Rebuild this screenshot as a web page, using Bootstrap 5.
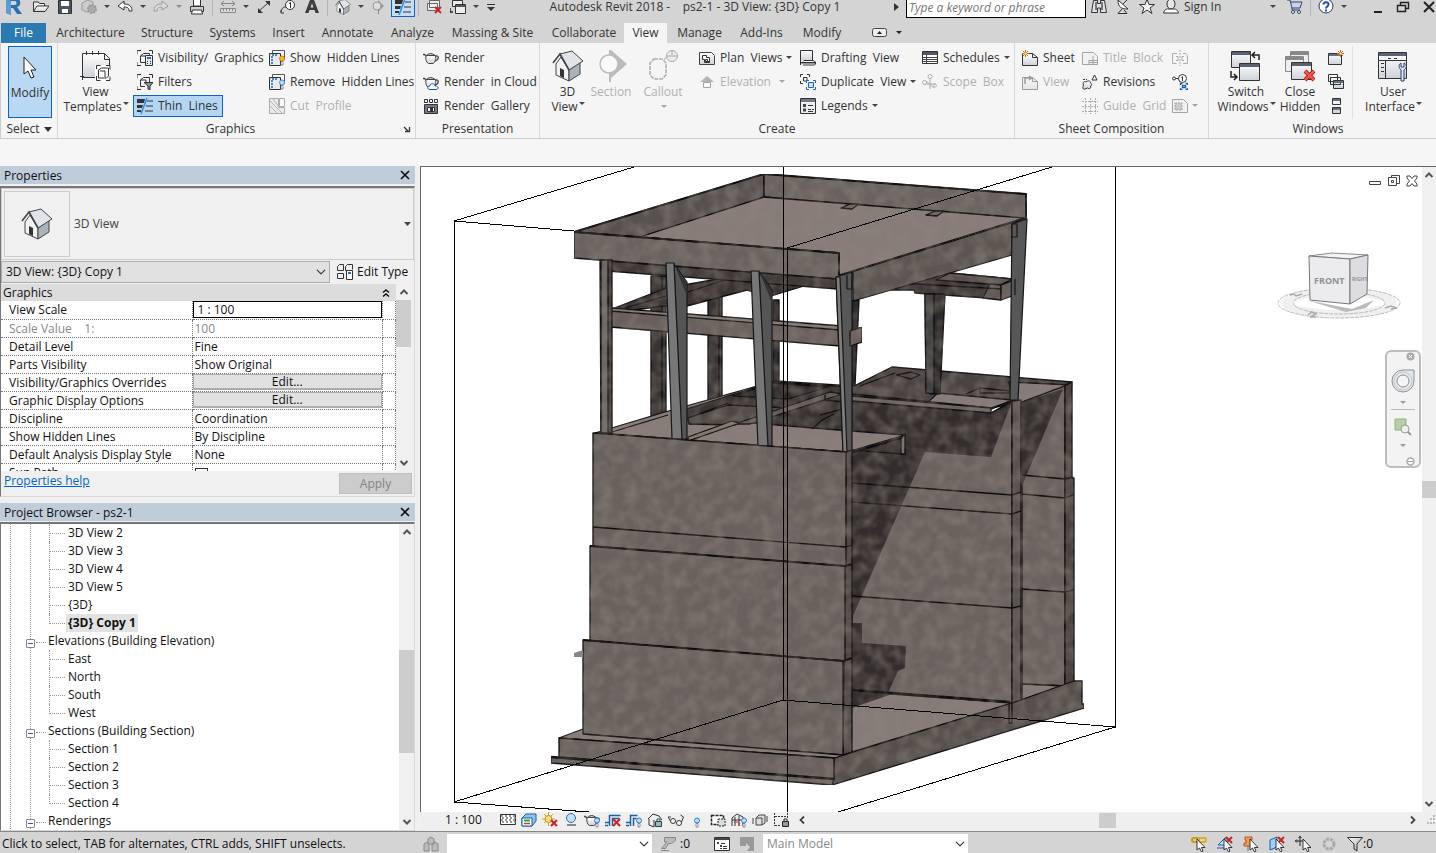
<!DOCTYPE html>
<html lang="en">
<head>
<meta charset="utf-8">
<meta name="viewport" content="width=device-width, initial-scale=1">
<title>Autodesk Revit 2018 - ps2-1 - 3D View: {3D} Copy 1</title>
<link href="https://cdn.jsdelivr.net/npm/bootstrap@5.3.0/dist/css/bootstrap.min.css" rel="stylesheet">
<script src="https://cdn.jsdelivr.net/npm/bootstrap@5.3.0/dist/js/bootstrap.bundle.min.js"></script>
<style>
:root{--chrome:#d4d4d4;--ribbon:#f5f5f5;--ink:#333;--off:#b0b0b0;--panel:#f0f0f0;--cap:#bfccda}
body{font-family:"Open Sans","Noto Sans",sans-serif;font-size:12px;line-height:16px;color:#111;background:var(--panel)}
button{font:inherit;color:inherit;background:none;border:0;padding:0}
svg{display:block;flex:none}
.ic{width:16px;height:16px}
.big{width:32px;height:32px}
.caret{width:4px;height:4px;overflow:visible;fill:#444}
/* title bar */
.titlebar{background:var(--chrome);height:23px;color:var(--ink)}
.titlebar .qat{gap:8px;padding-left:5px;height:14px}
.vsep{width:1px;height:18px;background:#b4b4b4;margin:0 -1px}
.qat .on{width:24px;height:20px;margin:0 -4px;border:1px solid #0b66c3;background:#c3def5;padding:0 3px}
.tool-right{gap:8px;height:14px}
.search{width:180px;height:22px;border:1px solid #000;font-style:italic;padding:0 2px;border-radius:0;font-size:12px;background:#fff;margin:0 -3px 0 -1px}
.search::placeholder{color:#777}
/* tabs */
.rtabs{background:var(--chrome);height:20px;color:var(--ink);padding-left:1px}
.rtabs a{color:inherit;text-decoration:none;line-height:20px;text-align:center;display:block}
.rtabs .file{background:#2b7ab2;color:#fff}
.rtabs .sel{background:var(--ribbon)}
/* ribbon */
.ribbon{background:var(--ribbon);height:96px;border-bottom:1px solid #ccc;border-left:1px solid #ccc;color:var(--ink)}
.rpanel{border-right:1px solid #d8d8d8;padding-top:3px}
.rpanel:last-child{border:0;padding-right:9px}
.rtitle{height:18px;line-height:18px;text-align:center;margin-top:1px}
.rbody{height:73px}
.rcol{display:flex;flex-direction:column}
.rb{height:24px;display:flex;align-items:center;gap:5px;white-space:pre;padding-left:4px}
.rb.act{height:22px;margin:1px 0;padding:0 4px 0 3px;border:1px solid #0b66c3;background:#b5d6f2}
.lb{display:flex;flex-direction:column;align-items:center;line-height:15px;padding-top:4px;justify-content:flex-start;gap:2px}
.lb .caret{margin-left:2px}
.off{color:var(--off)}
.off svg{opacity:.45}
.modify{border:1px solid #0b66c3;background:#b9d8f3;height:72px;width:44px;margin:0 5px 0 7px;padding-top:8px;gap:4px}
.optbar{height:27px;background:#f6f6f6}
/* docked panels */
.dock{width:418px;background:var(--panel);padding-right:3px}
.cap{background:var(--cap);height:18px;line-height:17px;padding:0 5px 0 4px}
.well{border:1px solid #d8d8d8;border-top:2px solid #777;border-left:1px solid #777}
.typesel{height:72px;border:1px solid #ccc;color:#444;padding:2px}
.thumb{width:66px;height:66px;border:1px solid #ccc}
.flat{border-radius:0;font-size:12px;line-height:16px;padding:0 16px 0 4px;color:#111;background-size:10px 10px;background-position:right 3px center}
.inst{height:22px;border:1px solid #adadad;background-color:#e1e1e1;width:329px}
.ptable{width:395px;table-layout:fixed;border-collapse:collapse;background:#fff}
.ptable td,.ptable th{height:18px;line-height:17px;padding:0 2px;border-bottom:1px dotted #777;border-right:1px dotted #777;font-weight:400;white-space:pre}
.ptable th{padding-left:8px}
.ptable .grp th{background:#dcdcdc;border:0;padding-left:2px;height:17px}
.pedit{width:100%;height:17px;border:1px solid #000;padding:0 4px;display:block;color:#111;line-height:15px}
.pcheck{appearance:none;width:13px;height:13px;border:1px solid #333;background:#fff;display:block;margin-top:4px}
.pbtn{width:100%;height:16px;line-height:14px;border:1px solid #adadad;border-bottom-width:2px;background:#e1e1e1;display:block}
.sb{width:15px;background:#f0f0f0;display:flex;flex-direction:column;align-items:center;padding:4px 0}
.thumbv{background:#cdcdcd;width:15px}
.apply{width:73px;height:21px;background:#ccc;border:1px solid #bfbfbf;color:#838383}
/* tree */
.tree{background:repeating-linear-gradient(#999 0 1px,#fff 1px 2px) 9px 0/1px 100% no-repeat,repeating-linear-gradient(#999 0 1px,#fff 1px 2px) 29px 0/1px 100% no-repeat,#fff}
.tree ul{list-style:none;margin:0;padding:0}
.kids li{height:18px;display:flex;margin-left:48px;border-left:1px dotted #999}
.kids li:last-child{border-left-color:transparent}
.kids li::before{content:"";width:15px;height:10px;border-bottom:1px dotted #999;margin-right:1px}
.kids li:last-child::before{border-left:1px dotted #999;margin-left:-1px;width:16px}
.kids span{padding:0 2px;line-height:18px}
.kids .cur{background:#e2e2e2;font-weight:700}
.node{height:18px;line-height:18px;display:flex;align-items:center;padding-left:25px}
.node i{width:9px;height:9px;border:1px solid #888;background:#fff linear-gradient(#3a56a5,#3a56a5) center/5px 1px no-repeat;margin-top:4px;border-radius:1px}
.node b{width:10px;border-bottom:1px dotted #999;margin:3px 2px 0 1px}
/* drawing area */
.stage{min-width:0;padding-left:2px}
.view{border-left:1px solid #666;border-top:1px solid #666;background:#fff}
.vbar{height:19px;background:#efefef;gap:5px;padding-bottom:3px}
.scale{width:75px;padding-left:25px}
.status{height:22px;background:var(--chrome);border-top:1px solid #888;padding-top:2px}
.status .form-select{height:19px;border:0;width:205px;background-color:#fff;color:#888}
.hud{width:36px;height:118px;border:2px solid #bdbdbd;border-radius:6px;background:#f3f3f3;right:1px;top:183px}
.mdi{right:4px;top:8px;gap:6px}
.cube{right:20px;top:80px}
</style>
</head>
<body class="vh-100 d-flex flex-column overflow-hidden">
<svg width="0" height="0" class="position-absolute" aria-hidden="true">
<defs>
<linearGradient id="g" x2="0" y2="1"><stop stop-color="#fff"/><stop offset="1" stop-color="#cdd1d8"/></linearGradient>
<linearGradient id="gh" y2="1"><stop stop-color="#fff"/><stop offset="1" stop-color="#9aa0a8"/></linearGradient>
<symbol id="car" viewBox="0 0 4 4" overflow="visible"><path d="M-1 0h6l-3 3z"/></symbol>
<symbol id="house" viewBox="0 0 32 32"><path d="M4 14l5-7 8 13v11L4 25z" fill="#f1f2f4" stroke="#444"/><path d="M17 20l11-8v12l-11 7z" fill="#aab2bb" stroke="#444"/><path d="M8 18l4 2v8l-4-2z" fill="#333"/><path d="M8 4l12-3 11 10-14 9z" fill="#e0e3e7" stroke="#444"/><path d="M1 13l7-9 9 16" fill="none" stroke="#444" stroke-width="1.600"/></symbol>
<symbol id="thin" viewBox="0 0 16 16"><path d="M0 1h8L7 5H0zM0 7h6l-1 3H0zM0 12h4v2H0z" fill="#333"/><path d="M10 3h6M9 8h7M8 13h8" stroke="#333"/><path d="M10 0L4 16" stroke="#2d8fe8" stroke-width="1.500"/></symbol>
<symbol id="vg" viewBox="0 0 16 16"><path d="M0 4V.5h4M12 .5h3.500V4M0 12v3.500h4" fill="none" stroke="#333"/><path d="M3.500 6l3-2.500h6V5M3.500 6v6.500H8M3.500 6H8" fill="none" stroke="#333"/><path d="M8.500 5.500h7v10h-7z" fill="#e6e9ee" stroke="#333"/><path d="M10 7h4v2h-4z" fill="#2d6fd0"/><path d="M10 11h1v1h-1zM13 11h1v1h-1zM10 13h1v1h-1zM13 13h1v1h-1z" fill="#333"/></symbol>
<symbol id="filt" viewBox="0 0 16 16"><path d="M0 4V.5h4M12 .5h3.500V4M0 12v3.500h4" fill="none" stroke="#333"/><path d="M3.500 6l3-2.500h6V8M3.500 6v6.500H8M3.500 6H9v3" fill="none" stroke="#333"/><path d="M7 8.500h9l-3 3.500v4l-2-1v-3z" fill="#8b929b" stroke="#333"/></symbol>
<symbol id="hid" viewBox="0 0 16 16"><path d="M3.500 3V.5h12V10" fill="none" stroke="#555"/><path d="M.5 3.500h11v12H.5z" fill="#e6e9ee" stroke="#333"/><path d="M3 14V5h6" fill="none" stroke="#1b68c4" stroke-width="1.500" stroke-dasharray="2 1"/></symbol>
<symbol id="bulb" viewBox="0 0 16 16"><circle cx="13" cy="8.500" r="2.500" fill="var(--b)" stroke="var(--c)"/><path d="M12 11.500h2V15h-2z" fill="#fff" stroke="#666" stroke-width=".7"/></symbol>
<symbol id="cutp" viewBox="0 0 16 16"><path d="M.5.5h9v9h6v6H.5z" fill="#ddd" stroke="#555"/><path d="M1 3l12 12M1 8l7 7M4 1l6 8" stroke="#666"/><path d="M10.500.5h5v8h-5z" fill="#fff" stroke="#555"/></symbol>
<symbol id="tea" viewBox="0 0 16 16"><path d="M4 7L1.500 4.500H0M12 6c5-1 4 5-1.500 5" fill="none" stroke="#444" stroke-width="1.300"/><path d="M3 5.500h9.500c1 4-1 7.500-2.500 8H5.500C3 12.500 2.500 9 3 5.500z" fill="url(#g)" stroke="#444"/><path d="M3.500 5.500Q7.500 1.500 12 5.500z" fill="#ccc" stroke="#444"/></symbol>
<symbol id="cloud" viewBox="0 0 16 16"><path d="M7 15.500c-3 0-3-3.500 0-3.500 0-3 5-3 5 0 4 0 4 3.500 1 3.500z" fill="#fff" stroke="#2151b8"/></symbol>
<symbol id="gal" viewBox="0 0 16 16"><path d="M1.500 1.500h3v3h-3zM6.500 1.500h3v3h-3zM11.500 1.500h3v3h-3z" fill="#fff" stroke="#333"/><path d="M1.500 6.500h13v9h-13z" fill="#737b88" stroke="#333"/><path d="M4.500 9.500h7v4h-7z" fill="#fff" stroke="#333"/><path d="M7 10h3v3H7z" fill="#333"/></symbol>
<symbol id="plan" viewBox="0 0 16 16"><path d="M.5 2.500h12l3 3v9H.5z" fill="url(#g)" stroke="#444"/><path d="M3.500 5.500h4v2h3v4h-2v-2h-2v2h4v1h-5v-3h-2z" fill="#fff" stroke="#333"/></symbol>
<symbol id="elev" viewBox="0 0 16 16"><path d="M1 8l7-6 7 6z" fill="#666"/><path d="M4.500 8.500h7v5h-7z" fill="#fff" stroke="#444"/></symbol>
<symbol id="draft" viewBox="0 0 16 16"><path d="M1 .5h11.500v10H1z" fill="url(#g)"/><path d="M.5 15V.5h12v10" fill="none" stroke="#333"/><path d="M3 11.500l1-1h9l2.500 1.500v2l-1 1H3" fill="#fff" stroke="#333"/><path d="M0 12h15v1.500H0z" fill="#333"/></symbol>
<symbol id="dup" viewBox="0 0 16 16"><path d="M.5 3V.5H3M7 .5h2.500V3M.5 7v2.500H3M3.500 3.500h3.500v3.500h-3.500z" fill="none" stroke="#333"/><path d="M6.500 9V6.500H9M13 6.500h2.500V9M6.500 13v2.500H9M13 15.500h2.500V13" fill="none" stroke="#1b68c4"/><path d="M8.500 8.500h5v5h-5z" fill="#cde3f8" stroke="#1b68c4"/></symbol>
<symbol id="leg" viewBox="0 0 16 16"><path d="M.5.5h15v15H.5z" fill="#eceef1" stroke="#333"/><path d="M1 1h14v3H1z" fill="#6f7888"/><path d="M3 6h3v3H3zM3 10.500h3v3H3z" fill="#444"/><path d="M8 7.500h5M8 11.500h3M12 11.500h2M8 13.500h5" stroke="#333"/></symbol>
<symbol id="sched" viewBox="0 0 16 16"><path d="M.5 1.500h15v12H.5z" fill="#fff" stroke="#333"/><path d="M1 2h14v3H1z" fill="#4f5866"/><path d="M1 7.500h14M1 9.500h14M1 11.500h14M4.500 5v8" stroke="#444"/></symbol>
<symbol id="scope" viewBox="0 0 16 16"><path d="M8 3v12M2 10h12M4 7l8 7" stroke="#555" fill="none"/><circle cx="8" cy="2.500" r="2" fill="#fff" stroke="#555"/><circle cx="2.500" cy="8.500" r="2" fill="#fff" stroke="#555"/><circle cx="13" cy="11.500" r="1.500" fill="#fff" stroke="#555"/></symbol>
<symbol id="spark" viewBox="0 0 16 16"><path d="M3.500 0v7M0 3.500h7M1 1l5 5M6 1L1 6" stroke="#d7641b"/><circle cx="3.500" cy="3.500" r="1.300" fill="#ffe36a"/></symbol>
<symbol id="sheet" viewBox="0 0 16 16"><path d="M.5 3.500h10l5 4v8H.5z" fill="url(#g)" stroke="#333"/><path d="M10.500 3.500v4h5" fill="none" stroke="#333"/></symbol>
<symbol id="tblk" viewBox="0 0 16 16"><path d="M.5 2.500h11l4 4v8H.5z" fill="#eee" stroke="#444"/><path d="M7 10.500h8M7 12.500h8M7 10v4M11 6v8" stroke="#444"/></symbol>
<symbol id="rev" viewBox="0 0 16 16"><path d="M12.500 1l2.500 5h-5z" fill="#fff" stroke="#333"/><path d="M3 15c-3 1-2-3-1.500-4C0 8 3 7 4 8c2-2 5-1 4.500 1 2 1 1 3 0 3 1 3-2 3-3 2z" fill="url(#g)" stroke="#333"/><path d="M1 5.500h4" stroke="#333" stroke-dasharray="2 1"/></symbol>
<symbol id="gg" viewBox="0 0 16 16"><path d="M3.500 0v16M8.500 0v16M13.500 0v16M0 3.500h16M0 8.500h16M0 13.500h16" stroke="#555" stroke-dasharray="2 1"/></symbol>
<symbol id="mline" viewBox="0 0 16 16"><path d="M5 3.500H.5v10h4M11 3.500h3l1.500 2v8H11M4 6.500h2v4H4M12 6.500h-2v4h2" fill="none" stroke="#555"/><path d="M8 0v16" stroke="#555" stroke-dasharray="2 1"/></symbol>
<symbol id="refs" viewBox="0 0 16 16"><path d="M2 4.500h5" stroke="#333"/><circle cx="2" cy="4.500" r="1.500" fill="#fff" stroke="#333"/><circle cx="10.500" cy="4.500" r="4" fill="#fff" stroke="#333"/><path d="M9.500 3.500l1-1V7" stroke="#333" fill="none"/><path d="M8.500 11V9.500h2M15.500 11V9.500h-2M8.500 14v1.500h2M15.500 14v1.500h-2M10.500 11.500h3v2h-3z" stroke="#1b68c4" fill="none" stroke-width="1.400"/></symbol>
<symbol id="vref" viewBox="0 0 16 16"><path d="M.5 1.500h11l4 4v9H.5z" fill="#eee" stroke="#444"/><path d="M3 5h7v7H3z" fill="#999" stroke="#444" stroke-dasharray="2 1"/></symbol>
<symbol id="win" viewBox="0 0 16 16"><path d="M.5 3.500h13v11H.5z" fill="url(#g)" stroke="#333"/><path d="M1 4h12v2H1z" fill="#667080"/></symbol>
<symbol id="casc" viewBox="0 0 16 16"><path d="M.5.5h9v7h-9zM2.500 3.500h10v7h-10zM5.500 6.500h10v8h-10z" fill="url(#g)" stroke="#333"/><path d="M6 7h9v2H6z" fill="#667080"/></symbol>
<symbol id="tile" viewBox="0 0 16 16"><path d="M4.500.5h8v6h-8zM4.500 9.500h8v6h-8z" fill="url(#g)" stroke="#333"/><path d="M5 1h7v2H5zM5 10h7v2H5z" fill="#667080"/></symbol>
<symbol id="ptr" viewBox="0 0 16 16"><path d="M6 3v11l2.500-2 2 4 1.500-1-1.500-3.500H14z" fill="#fff" stroke="#222" stroke-width=".9"/></symbol>
<symbol id="up" viewBox="0 0 10 8"><path d="M1.500 6L5 2.500 8.500 6" fill="none" stroke="#555" stroke-width="2"/></symbol>
<symbol id="dn" viewBox="0 0 10 8"><path d="M1.500 2L5 5.500 8.500 2" fill="none" stroke="#555" stroke-width="2"/></symbol>
<filter id="stone" x="0" y="0" width="100%" height="100%" color-interpolation-filters="sRGB"><feTurbulence type="fractalNoise" baseFrequency=".08" numOctaves="2" seed="4"/><feColorMatrix values="0 0 0 0 .56  0 0 0 0 .52  0 0 0 0 .49  1 0 0 0 -.34"/><feComposite in2="SourceAlpha" operator="in" result="n"/><feMerge><feMergeNode in="SourceGraphic"/><feMergeNode in="n"/></feMerge></filter>
</defs>
</svg>

<header class="titlebar d-flex align-items-start">
  <div class="qat d-flex align-items-center">
    <svg width="20" height="18" viewBox="0 0 20 18"><path d="M1 0h10c5 0 6 8 1 9l5 7h-5L8 10H6v7l-5-2z" fill="#2a70b5"/><path d="M6 3h4c2 0 2 4 0 4H6z" fill="#d4d4d4"/><path d="M1 0l5 3v14l-5-2z" fill="#5c9bd2"/></svg>
    <button aria-label="Open"><svg class="ic" viewBox="0 0 16 16"><path d="M.5 12V3h5l1 1.500h5V7" fill="#eee" stroke="#333"/><path d="M.5 12.500L4 7h12l-4 5.500z" fill="url(#g)" stroke="#333"/></svg></button>
    <button aria-label="Save"><svg class="ic" viewBox="0 0 16 16"><path d="M1.500 1.500h13v13h-13z" fill="#4d5563" stroke="#333"/><path d="M4 2h8v5H4zM5 10h6v4H5z" fill="#fff"/></svg></button>
    <button aria-label="Synchronize"><svg class="ic" viewBox="0 0 16 16"><path d="M1 4l6-3 5 2v8l-6 2-5-2z" fill="#ccc" stroke="#999"/><circle cx="11" cy="10" r="4" fill="#aaa" stroke="#999" stroke-dasharray="2 1" stroke-width="2"/></svg></button>
    <svg class="caret"><use href="#car"/></svg>
    <button aria-label="Undo"><svg class="ic" viewBox="0 0 16 16"><path d="M1 7l6-5v3c6 0 8 3 8 7h-3c0-3-1-4-5-4v3z" fill="#fff" stroke="#333"/></svg></button>
    <svg class="caret"><use href="#car"/></svg>
    <button aria-label="Redo"><svg class="ic" viewBox="0 0 16 16"><path d="M15 7L9 2v3c-6 0-8 3-8 7h3c0-3 1-4 5-4v3z" fill="#ddd" stroke="#999"/></svg></button>
    <svg class="caret opacity-50"><use href="#car"/></svg>
    <button aria-label="Print"><svg class="ic" viewBox="0 0 16 16"><path d="M4.500 0h7v7h-7z" fill="#fff" stroke="#333"/><path d="M1.500 7.500h13v5h-13z" fill="#ccd0d6" stroke="#333"/><path d="M3.500 11h9l1 4h-11z" fill="#fff" stroke="#333"/></svg></button>
    <span class="vsep"></span>
    <button aria-label="Measure"><svg class="ic" viewBox="0 0 16 16"><path d="M1 4.500h14M4 2L1 4.500 4 7M12 2l3 2.500L12 7" stroke="#888" fill="none"/><path d="M.5 9.500h15v4H.5z" fill="#ddd" stroke="#888"/><path d="M3.500 10v2M6.500 10v2M9.500 10v2M12.500 10v2" stroke="#888"/></svg></button>
    <svg class="caret"><use href="#car"/></svg>
    <button aria-label="Aligned dimension"><svg class="ic" viewBox="0 0 16 16"><path d="M2 13L13 3" stroke="#333"/><path d="M2 9v5h5zM14 7V2H9z" fill="#333"/></svg></button>
    <button aria-label="Tag"><svg class="ic" viewBox="0 0 16 16"><circle cx="10" cy="6" r="4.500" fill="#fff" stroke="#333"/><path d="M9 4.500l1.500-1V9M1 13c1-5 3-5 5-5M1 11v3h3" fill="none" stroke="#333"/></svg></button>
    <button aria-label="Text"><svg class="ic" viewBox="0 0 16 16"><path d="M1 14L6 1h4l5 13h-3.500l-1-3h-5l-1 3zM6.500 8.500h3L8 4z" fill="#3c3c3c"/></svg></button>
    <span class="vsep"></span>
    <button aria-label="Default 3D view"><svg class="ic"><use href="#house"/></svg></button>
    <svg class="caret"><use href="#car"/></svg>
    <button aria-label="Section"><svg class="ic" viewBox="0 0 16 16"><path d="M7 1l6 6-6 6z" fill="#999"/><circle cx="6" cy="7" r="4" fill="#ddd" stroke="#999"/><path d="M7.500 11v4" stroke="#888"/></svg></button>
    <button class="on" aria-label="Thin lines"><svg class="ic"><use href="#thin"/></svg></button>
    <span class="vsep"></span>
    <button aria-label="Close hidden"><svg class="ic" viewBox="0 0 16 16"><path d="M3.500 1.500h10v7h-10zM1.500 4.500h10v7h-10z" fill="#eee" stroke="#666"/><path d="M9 8l6 6M15 8l-6 6" stroke="#c22" stroke-width="2"/></svg></button>
    <button aria-label="Switch windows"><svg class="ic" viewBox="0 0 16 16"><path d="M2.500 1.500h10v6h-10zM5.500 5.500h10v9h-10z" fill="#eee" stroke="#333"/><path d="M6 6h9v2H6z" fill="#555"/><path d="M0 9v4h3" fill="none" stroke="#222" stroke-width="1.500"/></svg></button>
    <svg class="caret"><use href="#car"/></svg>
    <button aria-label="Customize"><svg width="10" height="10" viewBox="0 0 10 10"><path d="M1 2.500h8" stroke="#333"/><path d="M1 5h8L5 9z" fill="#333"/></svg></button>
  </div>
  <div class="flex-grow-1 text-center" style="line-height:14px;white-space:pre">Autodesk Revit 2018 -    ps2-1 - 3D View: {3D} Copy 1</div>
  <div class="tool-right d-flex align-items-center">
    <svg width="5" height="8" viewBox="0 0 5 8"><path d="M0 0l5 4-5 4z" fill="#333"/></svg>
    <input class="search" type="text" placeholder="Type a keyword or phrase" aria-label="Search">
    <button aria-label="Search"><svg class="ic" viewBox="0 0 16 16"><path d="M2.500 1.500h4v3h3v-3h4l2 12h-6V9h-3v4.500h-6z" fill="#dfe2e7" stroke="#333"/><path d="M5 3v8M11 3v8" stroke="#777" stroke-width="2"/></svg></button>
    <button aria-label="Communication Center"><svg class="ic" viewBox="0 0 16 16"><path d="M3 1c0 8 4 9 10 9z" fill="#fff" stroke="#333"/><path d="M8 5l4-4M7 10l-4 4.500h9L9 11" fill="none" stroke="#333"/></svg></button>
    <button aria-label="Favorites"><svg class="ic" viewBox="0 0 16 16"><path d="M8 0l2 5.500h5.500L11 9l2 5.500L8 11l-5 3.500L5 9 .5 5.500H6z" fill="#f4f4f4" stroke="#333"/></svg></button>
    <button class="d-flex align-items-center" style="width:100px;gap:5px"><svg class="ic" viewBox="0 0 16 16"><ellipse cx="8" cy="5" rx="4" ry="5" fill="#e4e6ea" stroke="#333"/><path d="M.5 14c1-4 4-4 4-4h7s3 0 4 4z" fill="#fff" stroke="#333"/></svg>Sign In</button>
    <svg class="caret"><use href="#car"/></svg>
    <button class="ms-1" aria-label="Exchange apps"><svg class="ic" viewBox="0 0 16 16"><path d="M0 1h3l2 8h8l2-6H4M5 9v2h8" fill="#ccd5e6" stroke="#2f4270"/><circle cx="6" cy="13" r="1.500" fill="#fff" stroke="#2f4270"/><circle cx="12" cy="13" r="1.500" fill="#fff" stroke="#2f4270"/></svg></button>
    <span class="vsep"></span>
    <button aria-label="Help"><svg class="ic" viewBox="0 0 16 16"><circle cx="8" cy="7" r="7" fill="#fff" stroke="#2b3a63"/><path d="M5.500 5.500c0-3 5-3 5 0 0 2-2.500 2-2.500 4M8 10.500v2" fill="none" stroke="#2151b8" stroke-width="2"/></svg></button>
    <svg class="caret me-3"><use href="#car"/></svg>
    <button aria-label="Minimize"><svg width="16" height="14" viewBox="0 0 16 14"><path d="M4 12h8" stroke="#222" stroke-width="2"/></svg></button>
    <button aria-label="Restore"><svg width="16" height="14" viewBox="0 0 16 14"><path d="M6.500 5V2.500h8v6H12M3.500 5.500h8v6h-8z" fill="none" stroke="#222" stroke-width="1.400"/></svg></button>
    <button class="ms-1" aria-label="Close"><svg width="14" height="14" viewBox="0 0 14 14"><path d="M2 2l10 10M12 2L2 12" stroke="#222" stroke-width="2"/></svg></button>
  </div>
</header>

<nav class="rtabs d-flex">
  <a href="#" class="file" style="width:45px">File</a>
  <a href="#" style="width:89px">Architecture</a>
  <a href="#" style="width:64px">Structure</a>
  <a href="#" style="width:67px">Systems</a>
  <a href="#" style="width:45px">Insert</a>
  <a href="#" style="width:73px">Annotate</a>
  <a href="#" style="width:57px">Analyze</a>
  <a href="#" style="width:103px">Massing &amp; Site</a>
  <a href="#" style="width:80px">Collaborate</a>
  <a href="#" class="sel" style="width:43px">View</a>
  <a href="#" style="width:65px">Manage</a>
  <a href="#" style="width:59px">Add-Ins</a>
  <a href="#" style="width:62px">Modify</a>
  <button class="d-flex align-items-center gap-2" style="margin-left:19px" aria-label="Minimize ribbon"><svg width="16" height="10" viewBox="0 0 16 10"><rect x=".5" y=".5" width="14" height="8" rx="2" fill="#eee" stroke="#444"/><path d="M5 6l2.500-3L10 6z" fill="#222"/></svg><svg width="6" height="4" viewBox="0 0 6 4"><path d="M0 0h6L3 3z" fill="#222"/></svg></button>
</nav>

<section class="ribbon d-flex">
  <div class="rpanel">
    <div class="rbody"><button class="lb modify"><svg width="20" height="26" viewBox="0 0 20 26"><path d="M4 2v17l4-3 3 7 3-1-3-7h5z" fill="#fff" stroke="#222"/></svg>Modify</button></div>
    <div class="rtitle d-flex align-items-center justify-content-center gap-1">Select<svg width="8" height="5" viewBox="0 0 8 5"><path d="M0 0h8L4 5z" fill="#333"/></svg></div>
  </div>
  <div class="rpanel" style="width:358px">
    <div class="rbody d-flex">
      <button class="lb" style="width:75px"><svg class="big" viewBox="0 0 32 32"><path d="M2.500 3.500h22l5 5v19h-27z" fill="url(#g)" stroke="#333"/><path d="M24.500 3.500v6h5M6.500 1v4M12.500 1v4M18.500 1v4M0 26.500h4M2.500 30v-4" fill="none" stroke="#333"/><path d="M15 15h16v16H15z" fill="#fff"/><path d="M16.500 19v-3.500h4M26 15.500h4v4M16.500 26v4.500h4M26 30.500h4v-4M18.500 20l3-2h7v8l-2 2h-8zM20 21h5v6" fill="none" stroke="#333"/></svg><span class="text-center">View<br>Templates<svg class="caret d-inline-block mb-2"><use href="#car"/></svg></span></button>
      <div class="rcol" style="width:132px">
        <button class="rb"><svg class="ic"><use href="#vg"/></svg>Visibility/  Graphics</button>
        <button class="rb"><svg class="ic"><use href="#filt"/></svg>Filters</button>
        <button class="rb act align-self-start"><svg class="ic"><use href="#thin"/></svg>Thin  Lines</button>
      </div>
      <div class="rcol">
        <button class="rb"><svg class="ic" style="--b:#ffb52e;--c:#e07b12"><use href="#hid"/><use href="#bulb"/></svg>Show  Hidden Lines</button>
        <button class="rb"><svg class="ic" style="--b:#b9dcff;--c:#4a90d9"><use href="#hid"/><use href="#bulb"/></svg>Remove  Hidden Lines</button>
        <button class="rb off"><svg class="ic"><use href="#cutp"/></svg>Cut  Profile</button>
      </div>
    </div>
    <div class="rtitle d-flex align-items-center"><span class="flex-grow-1">Graphics</span><svg class="me-1" width="8" height="8" viewBox="0 0 8 8"><path d="M1 2l4 4M6.500 2v4.500H2" stroke="#333" fill="none" stroke-width="1.300"/></svg></div>
  </div>
  <div class="rpanel" style="width:124px">
    <div class="rbody rcol" style="padding-left:3px">
      <button class="rb"><svg class="ic"><use href="#tea"/></svg>Render</button>
      <button class="rb"><svg class="ic"><use href="#tea"/><use href="#cloud"/></svg>Render  in Cloud</button>
      <button class="rb"><svg class="ic"><use href="#gal"/></svg>Render  Gallery</button>
    </div>
    <div class="rtitle">Presentation</div>
  </div>
  <div class="rpanel" style="width:475px">
    <div class="rbody d-flex">
      <button class="lb ps-1" style="width:51px"><svg class="big"><use href="#house"/></svg><span class="text-center">3D<br>View<svg class="caret d-inline-block mb-2"><use href="#car"/></svg></span></button>
      <button class="lb off" style="width:40px"><svg class="big" viewBox="0 0 32 32"><path d="M16 0l16 14-16 14v4h-2V0z" fill="#777"/><circle cx="14" cy="14" r="9" fill="#fff" stroke="#777" stroke-width="1.500"/></svg>Section</button>
      <button class="lb off" style="width:64px"><svg class="big" viewBox="0 0 32 32"><path d="M7 9h8l4 4v12l-4 4H7l-4-4V13z" fill="none" stroke="#555" stroke-width="1.500" stroke-dasharray="4 1"/><path d="M17 10l3-4" stroke="#555"/><circle cx="25" cy="6" r="5.500" fill="#ddd" stroke="#555"/><path d="M20 6h11M25 1v4" stroke="#555"/></svg>Callout<svg class="caret mt-1"><use href="#car"/></svg></button>
      <div class="rcol" style="width:101px">
        <button class="rb"><svg class="ic"><use href="#plan"/></svg>Plan  Views<svg class="caret"><use href="#car"/></svg></button>
        <button class="rb off"><svg class="ic"><use href="#elev"/></svg>Elevation<svg class="caret ms-1"><use href="#car"/></svg></button>
      </div>
      <div class="rcol" style="width:122px">
        <button class="rb"><svg class="ic"><use href="#draft"/></svg>Drafting  View</button>
        <button class="rb"><svg class="ic"><use href="#dup"/></svg>Duplicate  View<svg class="caret"><use href="#car"/></svg></button>
        <button class="rb"><svg class="ic"><use href="#leg"/></svg>Legends<svg class="caret"><use href="#car"/></svg></button>
      </div>
      <div class="rcol">
        <button class="rb"><svg class="ic"><use href="#sched"/></svg>Schedules<svg class="caret"><use href="#car"/></svg></button>
        <button class="rb off"><svg class="ic"><use href="#scope"/></svg>Scope  Box</button>
      </div>
    </div>
    <div class="rtitle">Create</div>
  </div>
  <div class="rpanel" style="width:194px">
    <div class="rbody d-flex" style="padding-left:3px">
      <div class="rcol" style="width:60px">
        <button class="rb"><svg class="ic"><use href="#sheet"/><use href="#spark"/></svg>Sheet</button>
        <button class="rb off"><svg class="ic"><use href="#sheet"/><path d="M3 10V4h6M7 2l3 2-3 2" fill="none" stroke="#333" stroke-width="1.500"/></svg>View</button>
      </div>
      <div class="rcol" style="width:90px">
        <button class="rb off"><svg class="ic"><use href="#tblk"/></svg>Title  Block</button>
        <button class="rb"><svg class="ic"><use href="#rev"/></svg>Revisions</button>
        <button class="rb off"><svg class="ic"><use href="#gg"/></svg>Guide  Grid</button>
      </div>
      <div class="rcol">
        <button class="rb off" aria-label="Matchline"><svg class="ic"><use href="#mline"/></svg></button>
        <button class="rb" aria-label="References"><svg class="ic"><use href="#refs"/></svg></button>
        <button class="rb off" aria-label="Viewports"><svg class="ic"><use href="#vref"/></svg><svg class="caret"><use href="#car"/></svg></button>
      </div>
    </div>
    <div class="rtitle">Sheet Composition</div>
  </div>
  <div class="rpanel flex-grow-1">
    <div class="rbody d-flex" style="padding-left:7px">
      <button class="lb" style="width:60px"><svg class="big" viewBox="0 0 32 32"><path d="M1.500 1.500h19v16h-19z" fill="url(#g)" stroke="#333"/><path d="M2 2h18v3H2z" fill="#596273"/><path d="M9.500 13.500h20v17h-20z" fill="url(#g)" stroke="#333"/><path d="M10 14h19v3H10z" fill="#596273"/><path d="M23 5h6v5M25 2l-3 3 3 3M1 21v6h5M4 24l3 3-3 3" fill="none" stroke="#222" stroke-width="1.500"/></svg><span class="text-center">Switch<br>Windows<svg class="caret d-inline-block mb-2"><use href="#car"/></svg></span></button>
      <button class="lb" style="width:48px"><svg class="big" viewBox="0 0 32 32"><path d="M6.500 1.500h18v14h-18z" fill="#eee" stroke="#888"/><path d="M7 2h17v3H7z" fill="#888"/><path d="M1.500 6.500h18v15h-18z" fill="#eee" stroke="#888"/><path d="M2 7h17v3H2z" fill="#888"/><path d="M7.500 12.500h20v17h-20z" fill="url(#g)" stroke="#333"/><path d="M8 13h19v3H8z" fill="#596273"/><path d="M21 21l9 9M30 21l-9 9" stroke="#b3201f" stroke-width="4"/><path d="M21 21l9 9M30 21l-9 9" stroke="#f05a50" stroke-width="2"/></svg><span>Close<br>Hidden</span></button>
      <div class="rcol pe-2 border-end">
        <button class="rb" aria-label="Replicate"><svg class="ic"><use href="#win"/><use href="#spark" x="9" y="0"/></svg></button>
        <button class="rb" aria-label="Cascade"><svg class="ic"><use href="#casc"/></svg></button>
        <button class="rb" aria-label="Tile"><svg class="ic"><use href="#tile"/></svg></button>
      </div>
      <button class="lb ms-2" style="width:64px"><svg class="big" viewBox="0 0 32 32"><path d="M1.500 2.500h28v26h-28z" fill="url(#g)" stroke="#333"/><path d="M2 3h27v3H2z" fill="#596273"/><path d="M2 10.500h27M8.500 10v18" stroke="#333"/><path d="M4 13.500h3M4 17.500h3M4 21.500h3M11 8.500h3M17 8.500h3" stroke="#333"/><path d="M24 31v-11c-3-3-2-6 0-7v4h3v-4c3 1 3 5 0 7v11z" fill="#dfe5f0" stroke="#2f4270"/></svg><span class="text-center">User<br>Interface<svg class="caret d-inline-block mb-2"><use href="#car"/></svg></span></button>
    </div>
    <div class="rtitle">Windows</div>
  </div>
</section>
<div class="optbar flex-shrink-0"></div>

<main class="d-flex flex-grow-1" style="min-height:0">
  <aside class="dock d-flex flex-column flex-shrink-0">
    <div class="cap d-flex justify-content-between align-items-center flex-shrink-0">Properties<button aria-label="Close properties"><svg width="10" height="10" viewBox="0 0 10 10"><path d="M1 1l8 8M9 1L1 9" stroke="#111" stroke-width="1.700"/></svg></button></div>
    <div class="well flex-shrink-0" style="margin-top:2px">
      <div class="typesel d-flex align-items-center">
        <div class="thumb d-flex align-items-center justify-content-center"><svg class="big"><use href="#house"/></svg></div>
        <span class="ms-1 flex-grow-1">3D View</span><svg width="7" height="4" viewBox="0 0 7 4"><path d="M0 0h7L3.500 4z" fill="#444"/></svg>
      </div>
      <div class="d-flex align-items-center" style="height:24px">
        <select class="form-select flat inst" aria-label="Instance"><option>3D View: {3D} Copy 1</option></select>
        <button class="d-flex align-items-center gap-1" style="margin-left:7px"><svg class="ic" viewBox="0 0 16 16"><path d="M.5 2.500l2-2h4v6h-6zM8.500 2.500l2-2h5v5M.5 9.500h6v5h-6zM8.500 2.500v4h4" fill="#eee" stroke="#333"/><path d="M9.500 6.500h6v9h-6z" fill="#fff" stroke="#333"/><path d="M11 8h3v2h-3z" fill="#2d6fd0"/></svg>Edit Type</button>
      </div>
      <div class="d-flex overflow-hidden" style="height:187px">
        <table class="ptable align-self-start">
          <colgroup><col style="width:191px"><col><col style="width:13px"></colgroup>
          <tr class="grp"><th colspan="3"><div class="d-flex justify-content-between align-items-center pe-1">Graphics<svg width="8" height="10" viewBox="0 0 8 10"><path d="M1 4.500L4 2l3 2.500M1 8.500L4 6l3 2.500" fill="none" stroke="#111" stroke-width="1.500"/></svg></div></th></tr>
          <tr><th>View Scale</th><td class="p-0"><input class="pedit" value="1 : 100" aria-label="View Scale"></td><td></td></tr>
          <tr style="color:#888"><th>Scale Value    1:</th><td>100</td><td></td></tr>
          <tr><th>Detail Level</th><td>Fine</td><td></td></tr>
          <tr><th>Parts Visibility</th><td>Show Original</td><td></td></tr>
          <tr><th>Visibility/Graphics Overrides</th><td class="p-0"><button class="pbtn">Edit...</button></td><td></td></tr>
          <tr><th>Graphic Display Options</th><td class="p-0"><button class="pbtn">Edit...</button></td><td></td></tr>
          <tr><th>Discipline</th><td>Coordination</td><td></td></tr>
          <tr><th>Show Hidden Lines</th><td>By Discipline</td><td></td></tr>
          <tr><th>Default Analysis Display Style</th><td>None</td><td></td></tr>
          <tr><th>Sun Path</th><td><input type="checkbox" aria-label="Sun Path" class="pcheck"></td><td></td></tr>
        </table>
        <div class="sb"><svg width="10" height="8"><use href="#up"/></svg><div class="thumbv mt-1" style="height:47px"></div><svg class="mt-auto" width="10" height="8"><use href="#dn"/></svg></div>
      </div>
      <div class="d-flex justify-content-between" style="height:25px;padding:2px 2px 0 3px"><a href="#" style="color:#0066cc">Properties help</a><button class="apply" disabled>Apply</button></div>
    </div>
    <div class="cap d-flex justify-content-between align-items-center flex-shrink-0" style="margin-top:6px">Project Browser - ps2-1<button aria-label="Close browser"><svg width="10" height="10" viewBox="0 0 10 10"><path d="M1 1l8 8M9 1L1 9" stroke="#111" stroke-width="1.700"/></svg></button></div>
    <div class="well d-flex flex-grow-1 overflow-hidden" style="margin-top:1px;min-height:0">
      <div class="tree flex-grow-1">
        <ul class="kids"><li><span>3D View 2</span></li><li><span>3D View 3</span></li><li><span>3D View 4</span></li><li><span>3D View 5</span></li><li><span>{3D}</span></li><li><span class="cur">{3D} Copy 1</span></li></ul>
        <div class="node"><i></i><b></b>Elevations (Building Elevation)</div>
        <ul class="kids"><li><span>East</span></li><li><span>North</span></li><li><span>South</span></li><li><span>West</span></li></ul>
        <div class="node"><i></i><b></b>Sections (Building Section)</div>
        <ul class="kids"><li><span>Section 1</span></li><li><span>Section 2</span></li><li><span>Section 3</span></li><li><span>Section 4</span></li></ul>
        <div class="node"><i></i><b></b>Renderings</div>
      </div>
      <div class="sb"><svg width="10" height="8"><use href="#up"/></svg><div class="thumbv" style="height:103px;margin-top:114px"></div><svg class="mt-auto" width="10" height="8"><use href="#dn"/></svg></div>
    </div>
  </aside>

  <section class="stage flex-grow-1 d-flex flex-column">
    <div class="view d-flex flex-grow-1" style="min-height:0">
      <div class="flex-grow-1 position-relative" style="min-width:0">
        <svg class="w-100 h-100" viewBox="421 167 1001 645" preserveAspectRatio="xMinYMin meet" role="img" aria-label="Pump station 3D model">
          <g stroke="#0c0c0c" stroke-width="1.300" stroke-linejoin="round" filter="url(#stone)">
            <!-- rear posts and rear beams -->
            <path d="M651 276h15v139l-15 2z" fill="#383332"/><path d="M708 288h14v109l-14 3z" fill="#383332"/><path d="M719 288v110M662 276v140"/>
            <path d="M773 300h6v84h-6z" fill="#2d2a2a"/>
            <path d="M852 301l7-1-4 86h-3z" fill="#2a2828"/>
            <path d="M612 309l54-21 64-11 60 5 14 4-33 10-24-6-64 17-21-1-40 6z" fill="#3a3433"/>
            <path d="M688 292l40-13M625 308l41-12" fill="none"/>
            <path d="M608 261l230 18v10l-230-18z" fill="#3f3937"/>
            <path d="M873 290l77-17 62 6v14l-10 6-87-6-1-3z" fill="#3a3433"/><path d="M950 273l62 6-11 6-65-5z" fill="#5a514f"/><path d="M990 284l11 1v15l-18-2z" fill="#5f5653"/><path d="M900 283l102 6" fill="none"/>
            <path d="M1001 285l14-5v15l-14 5z" fill="#6a5f5c"/>
            <!-- right deck -->
            <path d="M852 387l40-20 180 15-50 20-31 6-139-12z" fill="#4a4342"/>
            <path d="M1012 400l-3-18 63 3-50 18z" fill="#857b78"/>
            <path d="M938 393l74 7-20 9-66-5z" fill="#857b78"/>
            <path d="M852 394l139 14 20-7M860 386l35-13M897 375l14-3 9 3-9 4zM966 394l14-6 30 3M980 389v4h30" fill="none"/>
            <path d="M925 294h20l-5 100-14-1z" fill="#2b2929"/><path d="M925 294h9v100l-8-1z" fill="#424242"/>
            <!-- right inner wall -->
            <path d="M852 400l139 13 21-12v302l-160-12z" fill="#6a625f"/>
            <path d="M852 400l139 13 20-9-20 53-66-5-73 166z" fill="#332e2d" stroke="none"/>
            <path d="M852 623h10v20l44 3-1 22-7 3-10 22-36-3z" fill="#332e2d" stroke="none"/>
            <path d="M852 396l139 12v5l-139-12" fill="#6a625f"/><path d="M991 413l20-10M852 483l160 12M852 502l160 12M852 596l160 12" fill="none"/>
            <path d="M1022 402l43-16v300l-43-2z" fill="#6a625f"/><path d="M1022 402l41-13-41 97z" fill="#332e2d" stroke="none"/>
            <path d="M1022 402l50-19M1022 475l43 4M1022 494l43 4M1022 589l43 3" fill="none"/>
            <path d="M1065 386l7-4v96h2v206l-9 2z" fill="#4a4340"/><path d="M1065 479l8-2M1065 498l8-3M1065 592l8-2" fill="none"/>
            <!-- base slab -->
            <path d="M852 691l160 12-177 54-8-6z" fill="#857b78"/><path d="M1022 684l43 2-43 14z" fill="#857b78"/>
            <path d="M852 690l40 4-40 14z" fill="#332e2d" stroke="none"/>
            <path d="M834 758l178-55 62-22h8v23h2v4l-252 77z" fill="#564f4c"/><path d="M852 690l158 12" stroke-width="2.500"/>
            <path d="M1012 401l9-1v300l-9 3z" fill="#5a524f"/><path d="M1012 495l9-3M1012 514l9-3M1012 608l9-2M1009 703v20h3v-21" fill="none"/>
            <!-- roof -->
            <path d="M574 232l190-58v23l-124 40z" fill="#575150"/>
            <path d="M764 174l262 20v25l-262-22z" fill="#69625f"/>
            <path d="M640 237l124-40 260 21-185 57v-22z" fill="#877c79"/>
            <path d="M842 275l182-56-12 6v30l-159 46v-29z" fill="#5c5552"/>
            <path d="M841 208l9-4h9l-7 5zM926 215l9-4h9l-7 5z" fill="#69625f"/>
            <path d="M574 232l265 21v26l-265-21z" fill="#69625f"/>
            <path d="M574 232l265 21v22" fill="none" stroke-width="2"/><path d="M764 174l262 20v24M574 232l190-58" fill="none" stroke-width="2"/>
            <!-- left deck -->
            <path d="M595 433l70-21 110-31 77 5v45l53 4-58 17z" fill="#877c79"/>
            <path d="M680 411l93-29 78 5v44l-111-9-60-2z" fill="#383332"/>
            <path d="M688 418l40-13 60 3-53 17-46-1z" fill="#4c4543"/><path d="M733 396l55 3 10-3 30-9-55-4z" fill="#2f2b2a"/>
            <path d="M735 424l95-32 12 2-92 30z" fill="#5f5755"/>
            <path d="M688 418l40-15M820 415l30-8M812 429l10-9 12-6M597 433l250 19M825 395v5l28 3" fill="none"/>
            <path d="M688 437l44-16 8 2-52 18z" fill="#7d7a6c"/><path d="M612 432l56-17" fill="none"/>
            <path d="M852 452l50-14v16l-50-4z" fill="#332e2d"/><path d="M901 438l4-4v20h-4z" fill="#7a706d"/><path d="M852 453l50-15"/>
            <!-- front beam and posts -->
            <path d="M612 308l230 18-1 5-230-19z" fill="#857b78"/><path d="M610 311l230 19v16l-230-19z" fill="#69605d"/>
            <path d="M600 260h12v173h-11z" fill="#453f3d"/><path d="M601 260h7v173h-7z" fill="#6d6562"/>
          </g>
          <g stroke="#161616" stroke-width="1.200" stroke-linejoin="round">
            <!-- steel columns -->
            <path d="M674 264l13 18v157h-6z" fill="#555"/><path d="M675 266l12 18v12z" fill="#333" stroke="none"/><path d="M666 263h8l8 176h-10z" fill="#777"/>
            <path d="M759 272l13 18v156h-5z" fill="#555"/><path d="M760 273l12 18v12z" fill="#333" stroke="none"/><path d="M751 271h8l9 175h-10z" fill="#777"/>
            <path d="M836 277l16-5v179l-9 1z" fill="#575757"/><path d="M836 277h4l7 175h-4z" fill="#7d7d7d"/><path d="M852 272v17h-5v-14" fill="none"/>
            <path d="M1012 224l15-5-9 181h-8z" fill="#575757"/><path d="M1012 224h5v13h-5M1015 279v16" fill="none"/>
          </g>
          <g stroke="#0c0c0c" stroke-width="1.300" stroke-linejoin="round" filter="url(#stone)">
            <path d="M850 331l12-4v15l-12 4z" fill="#6a5f5c"/>
            <!-- stepped walls -->
            <path d="M846 452l6-2v302l-9 3z" fill="#4e4744"/>
            <path d="M593 433l253 19v115l-253-20z" fill="#69615e"/><path d="M593 527l253 20 6-2" fill="none"/>
            <path d="M590 546l255 20v95l-255-20z" fill="#69615e"/><path d="M583 640l260 21v94l-260-21z" fill="#69615e"/>
            <path d="M590 546l255 20 7-2M583 640l260 21 9-3" fill="none" stroke-width="2"/>
            <path d="M559 738l24-9v5l260 21 9-3-17 6z" fill="#857b78"/>
            <path d="M559 738l275 20v21l-275-22z" fill="#69615e"/><path d="M551 757l283 22-2 6-281-22z" fill="#69615e"/><path d="M551 757l283 22" stroke-width="2.500"/>
            <path d="M574 653l9-3v7h-9z" fill="#888" stroke="none"/>
          </g>
          <path d="M634 167L454 221L574 231M454 221V802L589 812M454 802L783 700L1115 727V167M1115 727L838 812M1052 167L787 248V812M783 167V700" fill="none" stroke="#000" shape-rendering="crispEdges"/>
        </svg>
        <div class="mdi position-absolute d-flex">
          <svg width="13" height="12" viewBox="0 0 13 12"><path d="M.5 6.500h11v3H.5z" fill="#fff" stroke="#444"/></svg>
          <svg width="12" height="12" viewBox="0 0 12 12"><path d="M3.500 3V.5h8v8H9M.5 2.500h8v8h-8zM3.500 5.500h2v2h-2z" fill="#fff" stroke="#444"/></svg>
          <svg width="12" height="12" viewBox="0 0 12 12"><path d="M1 1h3l2 2.500L8 1h3v2L8.500 6 11 9v2H8L6 8.500 4 11H1V9l2.500-3L1 3z" fill="#fff" stroke="#444"/></svg>
        </div>
        <svg class="cube position-absolute" width="126" height="76" viewBox="1276 247 126 76">
          <ellipse cx="1339" cy="303" rx="53" ry="11" fill="none" stroke="#f0f0f0" stroke-width="8"/>
          <ellipse cx="1339" cy="303" rx="61" ry="15" fill="none" stroke="#bbb" stroke-dasharray="4 1"/><ellipse cx="1339" cy="303" rx="46" ry="11" fill="none" stroke="#bbb" stroke-dasharray="4 1"/>
          <path d="M1290 295l4-1 2 2 6-2M1308 315l4-3 4 2-6 3 6 0M1385 308l6-2 6 2-6 1" fill="none" stroke="#aaa" stroke-width="1.500"/>
          <path d="M1306 300l46 9 22-9-8 8-20 4z" fill="#bbb"/>
          <path d="M1309 256l23-3 36 2-18 4z" fill="#f4f4f4" stroke="#888"/><path d="M1309 256l41 3v45l-40-4z" fill="#ececee" stroke="#777"/><path d="M1350 259l18-4-1 39-17 10z" fill="#dcdde0" stroke="#777"/>
          <text x="1314" y="284" font-size="9" font-weight="700" fill="#8e9398">FRONT</text><text x="1352" y="281" font-size="5" font-weight="700" fill="#8e9398">RIGHT</text>
        </svg>
        <div class="hud position-absolute d-flex flex-column align-items-center">
          <svg class="align-self-end me-1" width="9" height="9" viewBox="0 0 9 9"><circle cx="4.500" cy="4.500" r="4" fill="#aaa"/><path d="M3 3l3 3M6 3L3 6" stroke="#fff"/></svg>
          <svg class="mt-2" width="24" height="24" viewBox="0 0 24 24"><path d="M12 1h11v11a11 11 0 1 1-11-11z" fill="#e4e6e8" stroke="#8c9196"/><circle cx="12" cy="12" r="6" fill="#f4f4f4" stroke="#8c9196"/><circle cx="12" cy="12" r="9" fill="none" stroke="#c3c6c9"/></svg>
          <svg class="caret opacity-50" style="margin-top:8px"><use href="#car"/></svg>
          <hr class="w-75 m-0 mt-1 mb-1">
          <svg class="mt-1" width="18" height="18" viewBox="0 0 18 18"><path d="M1 1h11v11H1z" fill="#b5d0a4" stroke="#8fb184"/><circle cx="11" cy="11" r="4" fill="#eee" stroke="#999"/><path d="M14 14l3 3" stroke="#999" stroke-width="2"/></svg>
          <svg class="caret opacity-50" style="margin-top:8px"><use href="#car"/></svg>
          <svg class="align-self-end mt-auto me-1" width="9" height="9" viewBox="0 0 9 9"><circle cx="4.500" cy="4.500" r="3.500" fill="#fff" stroke="#aaa" stroke-width="1.500"/><path d="M2 4.500h5" stroke="#aaa"/></svg>
        </div>
      </div>
      <div class="sb" style="width:14px"><svg width="10" height="8"><use href="#up"/></svg><div class="thumbv mt-auto" style="height:17px"></div><svg style="margin-top:302px" width="10" height="8"><use href="#dn"/></svg></div>
    </div>
    <div class="vbar d-flex align-items-center flex-shrink-0">
      <span class="scale text-nowrap">1 : 100</span>
      <svg class="ic" viewBox="0 0 16 16"><path d="M.5 2.500h15v10H.5z" fill="#fff" stroke="#333"/><path d="M1 4h14M2 6h14M1 8h14M2 10h14" stroke="#777" stroke-width="1.500" stroke-dasharray="2 2"/></svg>
      <svg class="ic" viewBox="0 0 16 16"><path d="M1 6l4-4h10v7l-4 5H1z" fill="#8cc4ee" stroke="#1b5fa8"/><path d="M1 6h10v8H1z" fill="#fff" stroke="#1b5fa8"/><path d="M3 8.500h6" stroke="#2a2" stroke-width="2"/><path d="M3 11.500h6" stroke="#c33" stroke-width="1.500"/></svg>
      <svg class="ic" viewBox="0 0 16 16"><path d="M6.500 0v14M0 7h13M2 2l9 9M11 2l-9 9" stroke="#e0a11c"/><circle cx="6.500" cy="7" r="3.500" fill="#ffe07a" stroke="#d08a10"/><path d="M9 8l6 6M15 8l-6 6" stroke="#c22" stroke-width="2"/></svg>
      <svg class="ic" viewBox="0 0 16 16"><circle cx="8" cy="6" r="4.500" fill="#bfe0ff" stroke="#2f6fb5"/><path d="M4 13h9" stroke="#888" stroke-width="2"/></svg>
      <svg class="ic" style="--b:#b9dcff;--c:#2d7fd9"><use href="#tea"/><use href="#bulb"/></svg>
      <svg class="ic" viewBox="0 0 16 16"><path d="M0 10.500h4M4.500 14V3.500h11M7.500 14V6.500h7M0 13.500h3" fill="none" stroke="#1b5fa8" stroke-width="1.500"/><path d="M8 7l7 7M15 7l-7 7" stroke="#c22" stroke-width="2"/></svg>
      <svg class="ic" viewBox="0 0 16 16" style="--b:#b9dcff;--c:#2d7fd9"><path d="M0 10.500h4M4.500 14V3.500h7M7.500 14V6.500h3M0 13.500h3" fill="none" stroke="#1b5fa8" stroke-width="1.500"/><use href="#bulb"/></svg>
      <svg class="ic" viewBox="0 0 16 16"><path d="M1 7l5-5 6 2 3 4M2 7v6l5 2V8" fill="#eee" stroke="#333"/><path d="M8.500 9.500h6v5h-6z" fill="#9bb" stroke="#244"/><path d="M10 9V7h3v2" fill="none" stroke="#244"/></svg>
      <svg class="ic" viewBox="0 0 16 16"><circle cx="5" cy="9" r="2.500" fill="#fff" stroke="#333"/><circle cx="11" cy="11" r="2.500" fill="#fff" stroke="#333"/><path d="M2.500 9L0 5h3M13.500 10l2-5-3-2" fill="none" stroke="#333"/></svg>
      <svg class="ic" style="--b:#b9dcff;--c:#2d7fd9" viewBox="5 0 16 16"><use href="#bulb" width="16" height="16"/></svg>
      <svg class="ic" viewBox="0 0 16 16"><path d="M1.500 3.500h12v9h-12z" fill="#fff" stroke="#222" stroke-width="1.500" stroke-dasharray="3 1"/><path d="M8 7h7v7H8z" fill="#ddd" stroke="#222" stroke-dasharray="2 1"/></svg>
      <svg class="ic" viewBox="0 0 16 16" style="--b:#b9dcff;--c:#2d7fd9"><path d="M1 14V6l5-4 6 3v9M1 8h11M4 5v9M8 4v10" fill="none" stroke="#333"/><path d="M3 10h5v4" fill="none" stroke="#c33"/><use href="#bulb"/></svg>
      <svg class="ic" viewBox="0 0 16 16"><path d="M4 6l3-3h6v8l-3 2M4 6h6v7H4zM1 6v6M15 4v6" fill="#ddd" stroke="#444"/></svg>
      <svg class="ic" viewBox="0 0 16 16"><path d="M1.500 1v13M14.500 1v6M2 4.500h12M2 13.500h6" fill="none" stroke="#333" stroke-dasharray="2 1"/><path d="M9.500 9.500h6v5h-6z" fill="#999" stroke="#222"/><path d="M11 9V7h3v2" fill="none" stroke="#222"/></svg>
      <svg class="ms-1" width="8" height="10" viewBox="0 0 8 10"><path d="M6 1.500L2.500 5 6 8.500" fill="none" stroke="#444" stroke-width="1.800"/></svg>
      <div class="flex-grow-1 d-flex justify-content-center align-self-stretch"><span style="width:17px;background:#cdcdcd;margin-top:1px"></span></div>
      <svg width="8" height="10" viewBox="0 0 8 10"><path d="M2 1.500L5.500 5 2 8.500" fill="none" stroke="#444" stroke-width="1.800"/></svg>
      <svg class="ms-1" width="10" height="10" viewBox="0 0 10 10"><path d="M7 0h2v2H7zM4 3h2v2H4zM7 3h2v2H7zM1 7h2v2H1zM4 7h2v2H4zM7 7h2v2H7z" fill="#bbb"/></svg>
    </div>
  </section>
</main>

<footer class="status d-flex align-items-center flex-shrink-0">
  <span style="width:423px;padding-left:2px">Click to select, TAB for alternates, CTRL adds, SHIFT unselects.</span>
  <svg class="ic" viewBox="0 0 16 16"><path d="M1 8l3-2 2 2v7H1zM9 8l3-2 3 2v7H9zM5 3l3-2 3 2v5H5z" fill="#bbb" stroke="#888"/></svg>
  <select class="form-select flat" style="margin-left:8px" aria-label="Active workset"><option></option></select>
  <svg class="ic ms-2" viewBox="0 0 16 16"><path d="M4.500 1.500h11v3l-4 3h-3l-3 5H1.500L7 6H4.500zM1 14.500h8" fill="#bbb" stroke="#888"/></svg><span class="ms-1" style="width:34px">:0</span>
  <svg class="ic" viewBox="0 0 16 16"><path d="M.5 1.500h15v13H.5z" fill="#fff" stroke="#333"/><path d="M1 2h14v2H1zM3 6h2v2H3zM6 9h2v2H6zM6 12h2v1H6z" fill="#444"/><path d="M7 7.500h4M9 10.500h4M9 12.500h4" stroke="#333"/></svg>
  <svg class="ic" style="margin-left:9px" viewBox="0 0 16 16"><path d="M1 1h14v14H8l3-4-4-4v3H1z" fill="#999"/></svg>
  <select class="form-select flat ms-2" aria-label="Design option"><option>Main Model</option></select>
  <div class="ms-auto d-flex align-items-center" style="gap:10px;padding-right:63px">
    <svg class="ic" viewBox="0 0 16 16"><rect x="1" y="2" width="7" height="4" rx="2" fill="none" stroke="#c99a17" stroke-width="2"/><rect x="7" y="2" width="8" height="4" rx="2" fill="none" stroke="#dcae26" stroke-width="2"/><use href="#ptr"/></svg>
    <svg class="ic" viewBox="0 0 16 16"><path d="M1 9L9 1v8zM0 12h9" fill="#bfe0ff" stroke="#1b5fa8"/><path d="M9 1l6 6M15 1L9 7" stroke="#c22" stroke-width="2"/><use href="#ptr" x="1"/></svg>
    <svg class="ic" viewBox="0 0 16 16"><path d="M2 1h7v3H8v3h2v3H1V7h2V4H2zM5 10v5" fill="#f09a5a" stroke="#b5561a"/><use href="#ptr" x="1"/></svg>
    <svg class="ic" viewBox="0 0 16 16"><path d="M1 4l7-3v10l-7 3z" fill="#9fd0f5" stroke="#1b5fa8"/><path d="M9 1l6 6M15 1L9 7" stroke="#c22" stroke-width="2"/><use href="#ptr" x="1"/></svg>
    <svg class="ic" viewBox="0 0 16 16"><path d="M5 0v10M0 5h10M3.500 2L5 .5 6.500 2M2 3.500L.5 5 2 6.500" stroke="#222" fill="none"/><use href="#ptr" x="2"/></svg>
    <svg class="ic" viewBox="0 0 16 16"><circle cx="8" cy="8" r="5" fill="none" stroke="#aaa" stroke-width="3" stroke-dasharray="3 1"/></svg>
    <span class="d-flex align-items-center"><svg class="ic" viewBox="0 0 16 16"><path d="M.5 1.500h15L10 8v7l-3-2V8z" fill="url(#gh)" stroke="#333"/></svg>:0</span>
  </div>
</footer>
</body>
</html>
